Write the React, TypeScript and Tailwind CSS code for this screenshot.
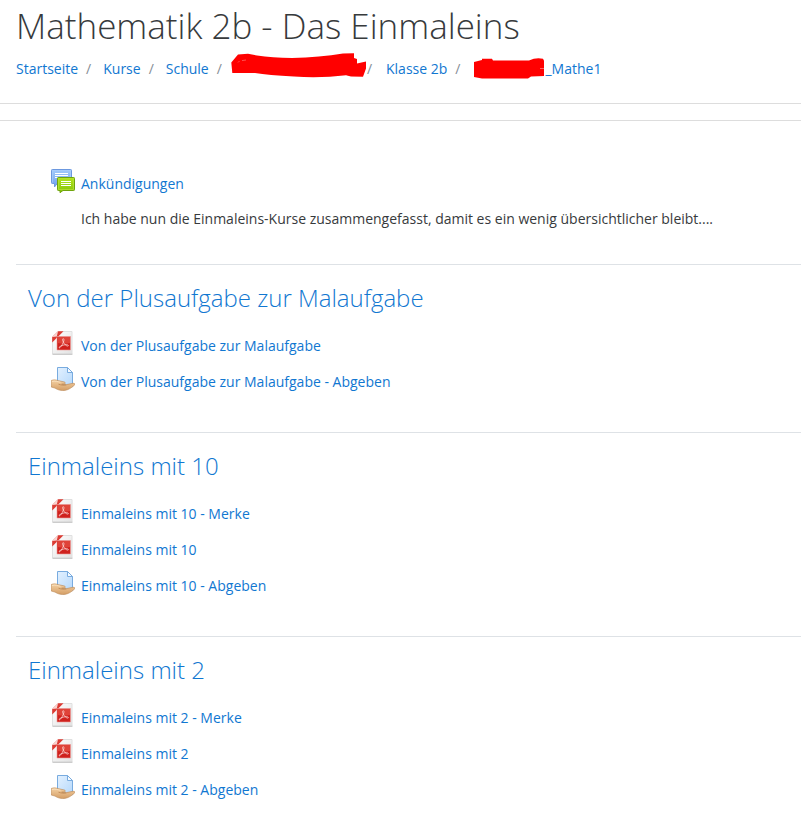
import React from "react";

type ActivityKind = "pdf" | "assignment";

type Activity = {
    kind: ActivityKind;
    name: string;
};

type Section = {
    title: string;
    activities: Activity[];
};

const sections: Section[] = [
    {
        title: "Von der Plusaufgabe zur Malaufgabe",
        activities: [
            { kind: "pdf", name: "Von der Plusaufgabe zur Malaufgabe" },
            { kind: "assignment", name: "Von der Plusaufgabe zur Malaufgabe - Abgeben" },
        ],
    },
    {
        title: "Einmaleins mit 10",
        activities: [
            { kind: "pdf", name: "Einmaleins mit 10 - Merke" },
            { kind: "pdf", name: "Einmaleins mit 10" },
            { kind: "assignment", name: "Einmaleins mit 10 - Abgeben" },
        ],
    },
    {
        title: "Einmaleins mit 2",
        activities: [
            { kind: "pdf", name: "Einmaleins mit 2 - Merke" },
            { kind: "pdf", name: "Einmaleins mit 2" },
            { kind: "assignment", name: "Einmaleins mit 2 - Abgeben" },
        ],
    },
];

const ForumIcon = () => (
    <svg className="size-6 shrink-0" viewBox="0 0 24 24" aria-hidden="true">
        <defs>
            <linearGradient id="forumBlue" x1="0" y1="0" x2="0" y2="1">
                <stop offset="0" stopColor="#a3cbfb" />
                <stop offset="1" stopColor="#6f9fec" />
            </linearGradient>
            <linearGradient id="forumGreen" x1="0" y1="0" x2="0" y2="1">
                <stop offset="0" stopColor="#b2e61a" />
                <stop offset="1" stopColor="#86c40c" />
            </linearGradient>
        </defs>
        <path d="M1.3.5h18.4q.8 0 .8.8v12.400q0 .8-.8.8H6.200L3.500 18v-3.500H1.300q-.8 0-.8-.8V1.300q0-.8.8-.8z" fill="url(#forumBlue)" stroke="#6c98df" />
        <path d="M1.500 13.500v-12h18v7" fill="none" stroke="#a9cdfb" strokeWidth=".7" />
        <path d="M4 4.500h13M4 6.500h13M4 8.500h3" stroke="#fff" />
        <path d="M7.300 8.500h15.400q.8 0 .8.8v11.400q0 .8-.8.8H12L9 23.700v-2.200H7.300q-.8 0-.8-.8V9.300q0-.8.8-.8z" fill="url(#forumGreen)" stroke="#6fa40c" />
        <path d="M7.500 20.500v-11h15v11z" fill="none" stroke="#b4e034" strokeWidth=".8" />
        <path d="M10 12.500h10M10 14.500h10M10 16.500h10" stroke="#fff" />
    </svg>
);

const PdfIcon = () => (
    <svg className="size-6 shrink-0" viewBox="0 0 24 24" aria-hidden="true">
        <defs>
            <linearGradient id="pdfPaper" x1="0" y1="0" x2="1" y2="1">
                <stop offset="0" stopColor="#fff" />
                <stop offset="1" stopColor="#e2e2e2" />
            </linearGradient>
        </defs>
        <path d="M8 .5h13v22.500H1.500V7z" fill="url(#pdfPaper)" stroke="#e0e0e0" />
        <path d="M1.500 23.300h20" stroke="#b9b9b9" strokeWidth=".8" />
        <path d="M7 .2h5.500L1.200 11.500V6z" fill="#dc3c34" />
        <path d="M7 .2 1.200 6l4.600-.4z" fill="#f8d5d2" />
        <path d="M6 5.500h13.500V19H6z" fill="#cf211d" stroke="#ef9c98" strokeWidth=".6" />
        <path d="M6.500 6h12.500v6q-6 1.500-12.500 0z" fill="#df4339" />
        <path d="M12.200 7.700c-.9 0-.7 1.800.2 3.500 1 2 2.800 3.800 4.300 3.900 1.200 0 .9-1.300-.9-1.400-2.300-.1-5.300.7-7 1.900-1.300.9-.8 1.700.2 1 1.400-1.100 3.500-5.100 3.900-7.100.2-1.100-.1-1.800-.7-1.800z" fill="none" stroke="#ffe5e2" strokeWidth=".7" />
    </svg>
);

const AssignmentIcon = () => (
    <svg className="size-6 shrink-0" viewBox="0 0 24 24" aria-hidden="true">
        <defs>
            <linearGradient id="sheetBlue" x1="0" y1="0" x2="1" y2="1">
                <stop offset="0" stopColor="#e3f1ff" />
                <stop offset="1" stopColor="#b5d8fb" />
            </linearGradient>
            <linearGradient id="handSkin" x1="0" y1="0" x2="0" y2="1">
                <stop offset="0" stopColor="#f4d1a3" />
                <stop offset="1" stopColor="#d49e66" />
            </linearGradient>
        </defs>
        <path d="M6.500.5h10l5 5v14h-15z" fill="url(#sheetBlue)" stroke="#78abdf" />
        <path d="M16.500.5v5h5z" fill="#f7fbff" stroke="#78abdf" strokeLinejoin="round" />
        <path d="M.2 13.500c2.300-.9 4.600-.8 6.800.1l6.200 1.300c1.500.4 1.500 1.900.1 2.100l-2.600.2 4.800.4 6.300-1.300c1.900-.3 2.700.9 1.500 2-2.400 2.200-5.500 4.300-8.800 5-3.800.8-7.800-.3-10.500-2.200L.2 20z" fill="url(#handSkin)" stroke="#b98451" strokeWidth=".6" />
        <path d="M1 14.500c3-.9 5.400.1 8.500.8" fill="none" stroke="#fbe5c5" strokeWidth=".8" />
        <path d="M7.500 17.200c2.500.9 5.200 1.300 7.800.8" fill="none" stroke="#b67d48" strokeWidth=".7" />
    </svg>
);

const LongScribble = () => (
    <svg className="mb-[6px] h-[26px] w-[136px]" viewBox="0 0 136 26" aria-hidden="true">
        <path d="M7 1.500 17 .8 26 2.500q15 2.300 35 2.500 28-.5 51-4.400l11-.3V5l3 1v4.500l9-2v7l-3 8.200-12-.2-5-1.200q-25 3-52 1.300Q37 22 24 20H1.300L.3 9.500z" fill="#f00" />
        <path d="M7 9.500 8.500 8M11 7.600l4-.6" stroke="#ff7070" strokeWidth=".7" />
    </svg>
);

const ShortScribble = () => (
    <svg className="h-[22px] w-[71px]" viewBox="0 0 71 22" aria-hidden="true">
        <path d="M0 4 8 2V.8h10l1 1.700h36Q62-.8 69 .8l1 2V18l-13 .4-3 2.200H8L0 19z" fill="#f00" />
        <path d="M66 10.500h4" stroke="#ff8a8a" strokeWidth=".7" />
    </svg>
);

const linkClass = "text-[#1177d1] hover:underline";

const breadcrumbItems = [
    { id: "home", content: "Startseite" },
    { id: "courses", content: "Kurse" },
    { id: "school", content: "Schule" },
    { id: "category", content: <LongScribble />, label: "Kategorie" },
    { id: "class", content: "Klasse 2b" },
    { id: "course", content: <><ShortScribble />_Mathe1</> },
];

const separatorSpacing: Record<string, string> = {
    category: "pr-[9px] pl-2",
    class: "pr-[14px]",
    course: "pr-[14px] pl-2",
};

const Breadcrumb = () => (
    <nav aria-label="Navigationspfad">
        <ol className="flex h-7 items-center whitespace-nowrap">
            {breadcrumbItems.map((item, index) => (
                <li key={item.id} className="flex items-center">
                    {index > 0 && (
                        <span className={`text-[#868e96] ${separatorSpacing[item.id] ?? "pr-3 pl-2"}`}>/</span>
                    )}
                    <a href="#" aria-label={item.label} className={`flex items-center ${linkClass}`}>
                        {item.content}
                    </a>
                </li>
            ))}
        </ol>
    </nav>
);

const ActivityRow = ({ icon, name }: { icon: React.ReactNode; name: string }) => (
    <a href="#" className={`flex h-9 items-start gap-[6px] pt-1 ${linkClass}`}>
        {icon}
        <span className="pt-[5px]">{name}</span>
    </a>
);

export default function App() {
    return (
        <div className="min-h-screen bg-white font-['Open_Sans','Segoe_UI',sans-serif] text-sm leading-5 text-[#373a3c]">
            <header className="border-b border-[#dddddd] pb-5 pl-4">
                <h1 className="pt-1 pb-2 text-[35px] leading-[43px] font-light">Mathematik 2b - Das Einmaleins</h1>
                <Breadcrumb />
            </header>

            <main className="mt-4 border-t border-[#dddddd] pt-11 pl-4">
                <section className="pb-[35px] pl-[35px]">
                    <ActivityRow icon={<ForumIcon />} name="Ankündigungen" />
                    <p className="pt-2 pl-[30px]">
                        Ich habe nun die Einmaleins-Kurse zusammengefasst, damit es ein wenig übersichtlicher bleibt....
                    </p>
                </section>

                {sections.map((section) => (
                    <section key={section.title} className="border-t border-[#dee2e6] pt-4 pb-[33px] pl-3">
                        <h2 className="pb-3 text-2xl leading-[34px] font-light">
                            <a href="#" className={linkClass}>{section.title}</a>
                        </h2>
                        <ul className="pl-[23px]">
                            {section.activities.map((activity) => (
                                <li key={activity.name}>
                                    <ActivityRow
                                        icon={activity.kind === "pdf" ? <PdfIcon /> : <AssignmentIcon />}
                                        name={activity.name}
                                    />
                                </li>
                            ))}
                        </ul>
                    </section>
                ))}
            </main>
        </div>
    );
}
